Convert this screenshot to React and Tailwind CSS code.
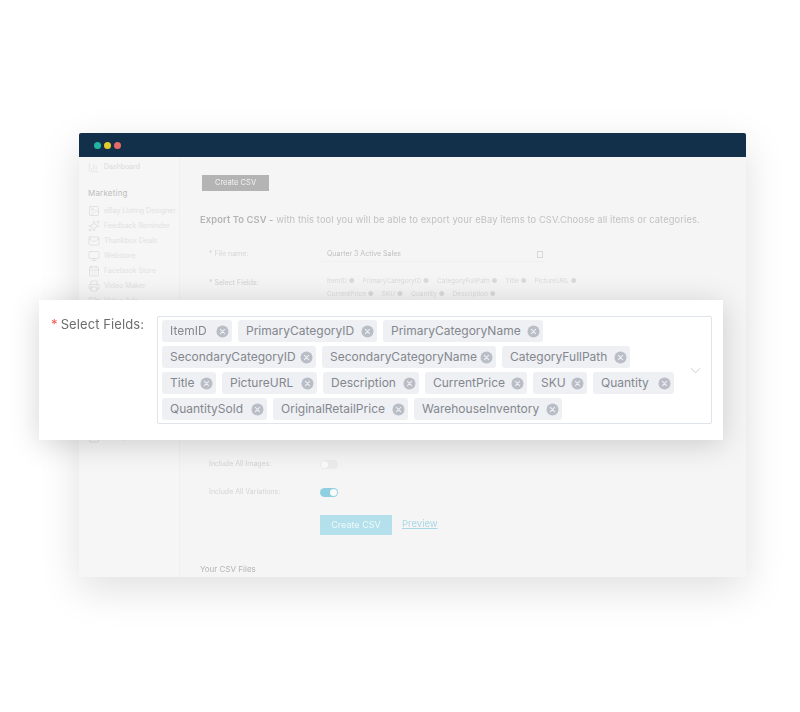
import React from 'react';
import { BarChart3, Image, Sparkles, Mail, Monitor, CalendarDays, Printer, Video, Calendar } from 'lucide-react';

const sideItems = [
  { label: 'eBay Listing Designer', icon: Image },
  { label: 'Feedback Reminder', icon: Sparkles },
  { label: 'Thankbox Deals', icon: Mail },
  { label: 'Webstore', icon: Monitor },
  { label: 'Facebook Store', icon: CalendarDays },
  { label: 'Video Maker', icon: Printer },
  { label: 'Video Ads', icon: Video },
];

const rows = [
  [
    { name: 'ItemID', w: 'w-[70px]' },
    { name: 'PrimaryCategoryID', w: 'w-[139px]' },
    { name: 'PrimaryCategoryName', w: 'w-[160px]' },
  ],
  [
    { name: 'SecondaryCategoryID', w: 'w-[154px]' },
    { name: 'SecondaryCategoryName', w: 'w-[174px]' },
    { name: 'CategoryFullPath', w: 'w-[128px]' },
  ],
  [
    { name: 'Title', w: 'w-[54px]' },
    { name: 'PictureURL', w: 'w-[95px]' },
    { name: 'Description', w: 'w-[96px]' },
    { name: 'CurrentPrice', w: 'w-[102px]' },
    { name: 'SKU', w: 'w-[54px]' },
    { name: 'Quantity', w: 'w-[81px]' },
  ],
  [
    { name: 'QuantitySold', w: 'w-[105px]' },
    { name: 'OriginalRetailPrice', w: 'w-[135px]' },
    { name: 'WarehouseInventory', w: 'w-[148px]' },
  ],
];

const miniChips = [
  ['ItemID', 'PrimaryCategoryID', 'CategoryFullPath', 'Title', 'PictureURL'],
  ['CurrentPrice', 'SKU', 'Quantity', 'Description'],
];

const CloseDot = () => (
  <svg viewBox="0 0 13 13" className="w-[13px] h-[13px] shrink-0">
    <circle cx="6.5" cy="6.5" r="6" fill="#b9bdc5" />
    <path d="M4.4 4.4l4.2 4.2M8.6 4.4l-4.2 4.2" stroke="#eef0f4" strokeWidth="1.1" strokeLinecap="round" />
  </svg>
);

const Chip = ({ label, width }) => (
  <div className={`${width} h-[22px] flex items-center justify-between pl-2 pr-[3px] mr-[6px] rounded-[3px] bg-[#eef0f4] text-[#84878e] text-[12px] whitespace-nowrap`}>
    <span>{label}</span>
    <CloseDot />
  </div>
);

const Toggle = ({ on }) => (
  <div className={`w-[18px] h-[9px] rounded-full flex items-center ${on ? 'bg-[#8fd0e0] justify-end' : 'bg-[#ececec] justify-start'}`}>
    <div className="w-[7px] h-[7px] mx-[1px] rounded-full bg-[#fafafa]" />
  </div>
);

export default function App() {
  return (
    <div className="w-[800px] h-[712px] bg-white pt-[133px] pl-[79px] overflow-hidden font-['Inter',sans-serif]">
      <div className="relative w-[667px] h-[444px] bg-[#f5f5f5] shadow-[0_12px_40px_rgba(0,0,0,0.13)] rounded-t-[2px]">
        <div className="h-[24px] bg-[#12304a] rounded-t-[2px] flex items-center gap-[3px] pl-[15px]">
          <span className="w-[7px] h-[7px] rounded-full bg-[#22b5a0]" />
          <span className="w-[7px] h-[7px] rounded-full bg-[#e2cd2c]" />
          <span className="w-[7px] h-[7px] rounded-full bg-[#e56a68]" />
        </div>

        <div className="flex h-[420px] overflow-hidden blur-[0.5px]">
          <aside className="w-[101px] shrink-0 bg-[#f6f6f6] border-r border-[#f0f0f0] pl-[9px] pt-[4px]">
            <div className="flex items-center gap-[5px] h-[12px] text-[#dadada] text-[7px]">
              <BarChart3 className="w-[11px] h-[11px]" strokeWidth={1.2} />
              <span>Dashboard</span>
            </div>
            <div className="mt-[14px] h-[12px] text-[#bdbdbd] text-[8px] tracking-[0.2px]">Marketing</div>
            <div className="mt-[6px] flex flex-col gap-[3px]">
              {sideItems.map((item) => (
                <div key={item.label} className="flex items-center gap-[4px] h-[12px] text-[#e2e2e2] text-[7px] whitespace-nowrap">
                  <item.icon className="w-[12px] h-[12px] text-[#cfcfcf] shrink-0" strokeWidth={1} />
                  <span>{item.label}</span>
                </div>
              ))}
            </div>
            <div className="mt-[124px] flex items-center gap-[4px] h-[12px] text-[#e2e2e2] text-[7px]">
              <Calendar className="w-[12px] h-[12px] text-[#cfcfcf]" strokeWidth={1} />
              <span>Settings</span>
            </div>
          </aside>

          <main className="flex-1 pl-[20px] pt-[18px]">
            <div className="ml-[2px] w-[67px] h-[16px] bg-[#b4b4b4] flex items-center justify-center text-[7.5px] text-[#f2f2f2]">Create CSV</div>
            <p className="mt-[23px] h-[12px] leading-[12px] text-[9.4px] text-[#c2c2c2] tracking-[0.09px] whitespace-nowrap">
              <span className="font-semibold text-[#b4b4b4]">Export To CSV -</span> with this tool you will be able to export your eBay items to CSV.Choose all items or categories.
            </p>

            <div className="mt-[21px] ml-[9px] flex items-center h-[15px] text-[7px] text-[#d6d6d6]">
              <span className="w-[111px]">* File name:</span>
              <div className="w-[225px] h-[15px] pl-[7px] border-b border-[#f0f0f0] flex items-center justify-between text-[#c0c0c0]">
                <span>Quarter 3 Active Sales</span>
                <span className="w-[6px] h-[7px] mr-[2px] border border-[#d8d8d8]" />
              </div>
            </div>

            <div className="mt-[13px] ml-[9px] flex text-[7px] text-[#d0d0d0]">
              <span className="w-[111px] pt-[3px]">* Select Fields:</span>
              <div className="flex flex-col gap-[3px] pl-[7px] pt-[2px]">
                {miniChips.map((row) => (
                  <div key={row[0]} className="flex gap-[8px] text-[#dadada] text-[6.5px]">
                    {row.map((name) => (
                      <span key={name}>{name} ●</span>
                    ))}
                  </div>
                ))}
              </div>
            </div>

            <div className="mt-[159px] ml-[9px] flex items-center h-[12px] text-[7px] text-[#d4d4d4]">
              <span className="w-[111px]">Include All Images:</span>
              <Toggle />
            </div>
            <div className="mt-[16px] ml-[9px] flex items-center h-[12px] text-[7px] text-[#d4d4d4]">
              <span className="w-[111px]">Include All Variations:</span>
              <Toggle on />
            </div>
            <div className="mt-[16px] ml-[120px] flex items-center gap-[10px]">
              <div className="w-[72px] h-[20px] bg-[#b3e0ea] flex items-center justify-center text-[9px] text-[#eef9fb]">Create CSV</div>
              <span className="text-[9.5px] text-[#abd8e4] underline">Preview</span>
            </div>
            <div className="mt-[28px] h-[12px] leading-[12px] text-[8px] text-[#b4b4b4]">Your CSV Files</div>
          </main>
        </div>

        <div className="absolute left-[-40px] top-[167px] w-[684px] h-[140px] bg-white shadow-[0_4px_28px_rgba(0,0,0,0.17)] flex pl-[12px] pt-[16px]">
          <div className="w-[106px] shrink-0 text-[13px] leading-[17px] text-[#6d6d6d] tracking-[0.1px] whitespace-nowrap">
            <span className="text-[#ee5a52] mr-[3px]">*</span>Select Fields:
          </div>
          <div className="w-[555px] h-[108px] border border-[#dfe3ea] rounded-[2px] flex items-center pl-[4px] pr-[10px]">
            <div className="flex-1 flex flex-col gap-[4px]">
              {rows.map((row) => (
                <div key={row[0].name} className="flex">
                  {row.map((chip) => (
                    <Chip key={chip.name} label={chip.name} width={chip.w} />
                  ))}
                </div>
              ))}
            </div>
            <svg viewBox="0 0 12 7" className="w-[11px] h-[7px] shrink-0">
              <path d="M1 1l5 5 5-5" fill="none" stroke="#c6cad2" strokeWidth="1" />
            </svg>
          </div>
        </div>
      </div>
    </div>
  );
}
